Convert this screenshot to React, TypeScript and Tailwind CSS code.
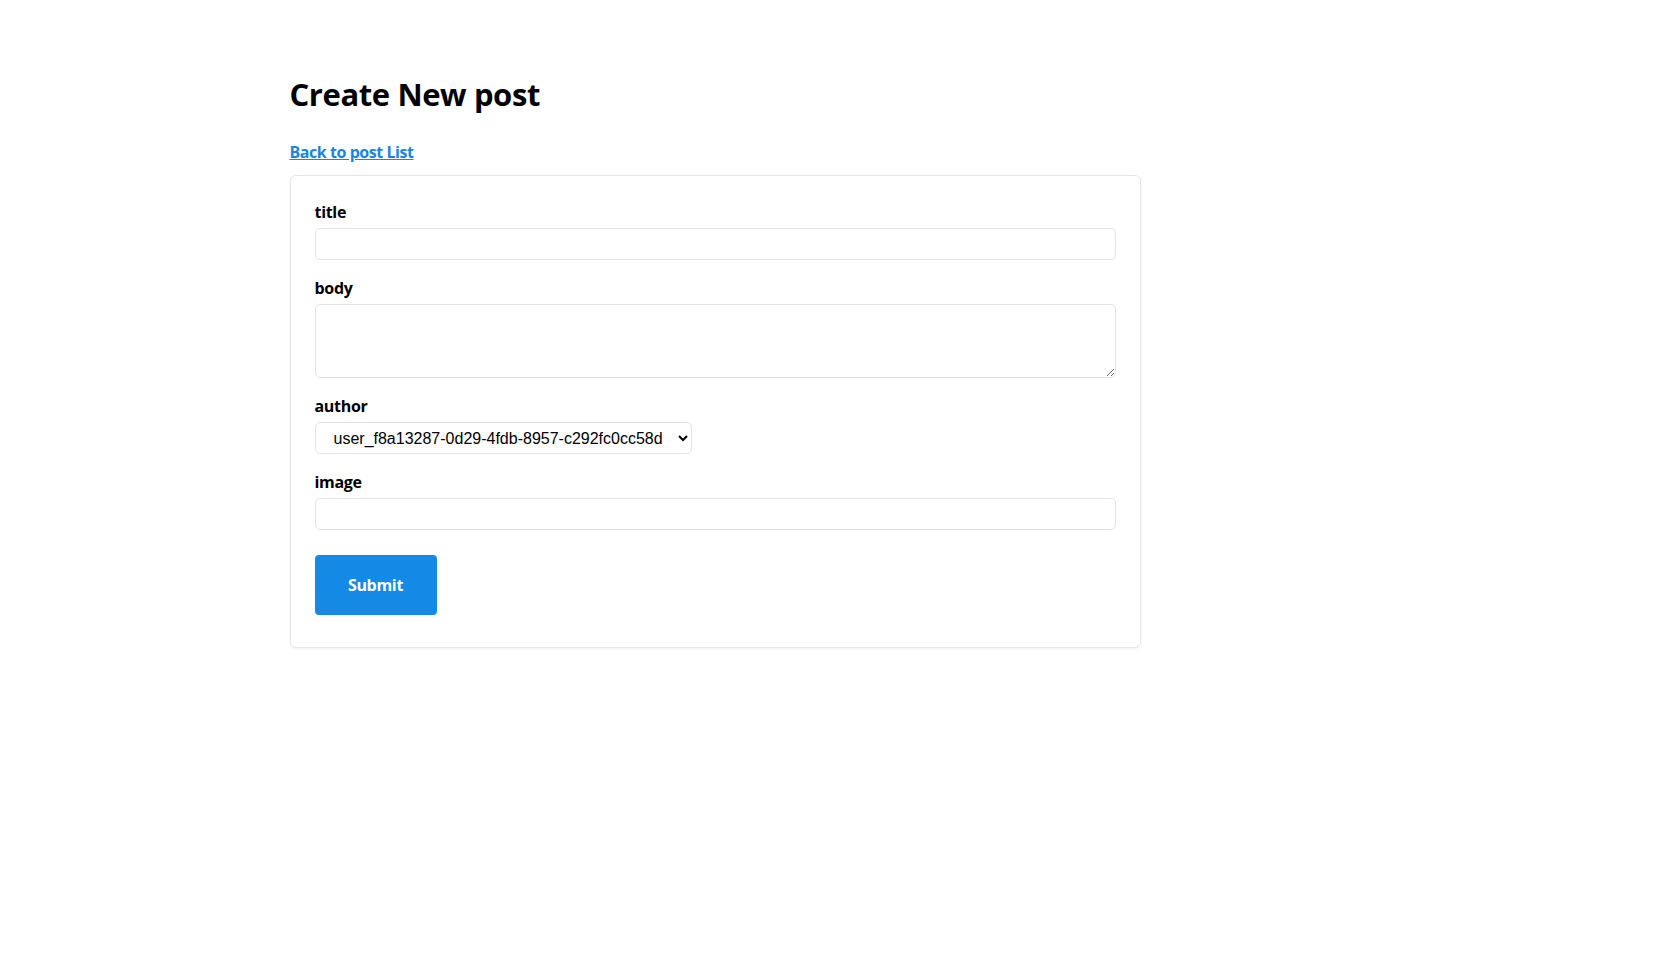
import React, { useState } from "react";

const AUTHORS = ["user_f8a13287-0d29-4fdb-8957-c292fc0cc58d"];

const inputClass =
  "block w-full rounded-[5px] border border-[#e3e3e3] bg-white px-2 text-base outline-none focus:border-[#1589e6]";

const labelClass = "mb-1 block text-base leading-6 font-bold tracking-[-0.3px]";

const CreatePostPage: React.FC = () => {
  const [title, setTitle] = useState("");
  const [body, setBody] = useState("");
  const [author, setAuthor] = useState(AUTHORS[0]);
  const [image, setImage] = useState("");

  const handleSubmit: React.FormEventHandler<HTMLFormElement> = (event) => {
    event.preventDefault();
  };

  return (
    <div className="min-h-screen bg-white font-['Open_Sans',sans-serif] text-black">
      <div className="mx-auto max-w-[1080px] pt-[74px]">
        <h1 className="text-[31px] leading-[40px] font-bold tracking-[-0.4px]">
          Create New post
        </h1>

        <a
          href="#"
          className="mt-[26px] inline-block text-base leading-6 font-bold tracking-[-0.45px] text-[#1a84e0] underline"
        >
          Back to post List
        </a>

        <form
          onSubmit={handleSubmit}
          className="mt-[11px] w-[851px] rounded-md border border-[#e6e6e6] bg-white px-6 pt-6 pb-8 shadow-[0_1px_3px_rgba(0,0,0,0.06)]"
        >
          {/* title */}
          <div className="mb-4">
            <label className={labelClass}>title</label>
            <input
              type="text"
              value={title}
              onChange={(e) => setTitle(e.target.value)}
              className={`${inputClass} h-8`}
            />
          </div>

          {/* body */}
          <div className="mb-4">
            <label className={labelClass}>body</label>
            <textarea
              value={body}
              onChange={(e) => setBody(e.target.value)}
              className={`${inputClass} h-[74px] py-1`}
            />
          </div>

          {/* author */}
          <div className="mb-4">
            <label className={labelClass}>author</label>
            <select
              value={author}
              onChange={(e) => setAuthor(e.target.value)}
              className="h-8 w-[377px] rounded-[5px] border border-[#e3e3e3] bg-white pl-[14px] pr-1 font-['Liberation_Sans',Arial,sans-serif] text-base"
            >
              {AUTHORS.map((id) => (
                <option key={id} value={id}>
                  {id}
                </option>
              ))}
            </select>
          </div>

          {/* image */}
          <div className="mb-[25px]">
            <label className={labelClass}>image</label>
            <input
              type="text"
              value={image}
              onChange={(e) => setImage(e.target.value)}
              className={`${inputClass} h-8`}
            />
          </div>

          <button
            type="submit"
            className="h-[60px] w-[122px] rounded-[4px] bg-[#1589e6] text-base font-bold tracking-[-0.3px] text-white"
          >
            Submit
          </button>
        </form>
      </div>
    </div>
  );
};

export default function App() {
  return <CreatePostPage />;
}
